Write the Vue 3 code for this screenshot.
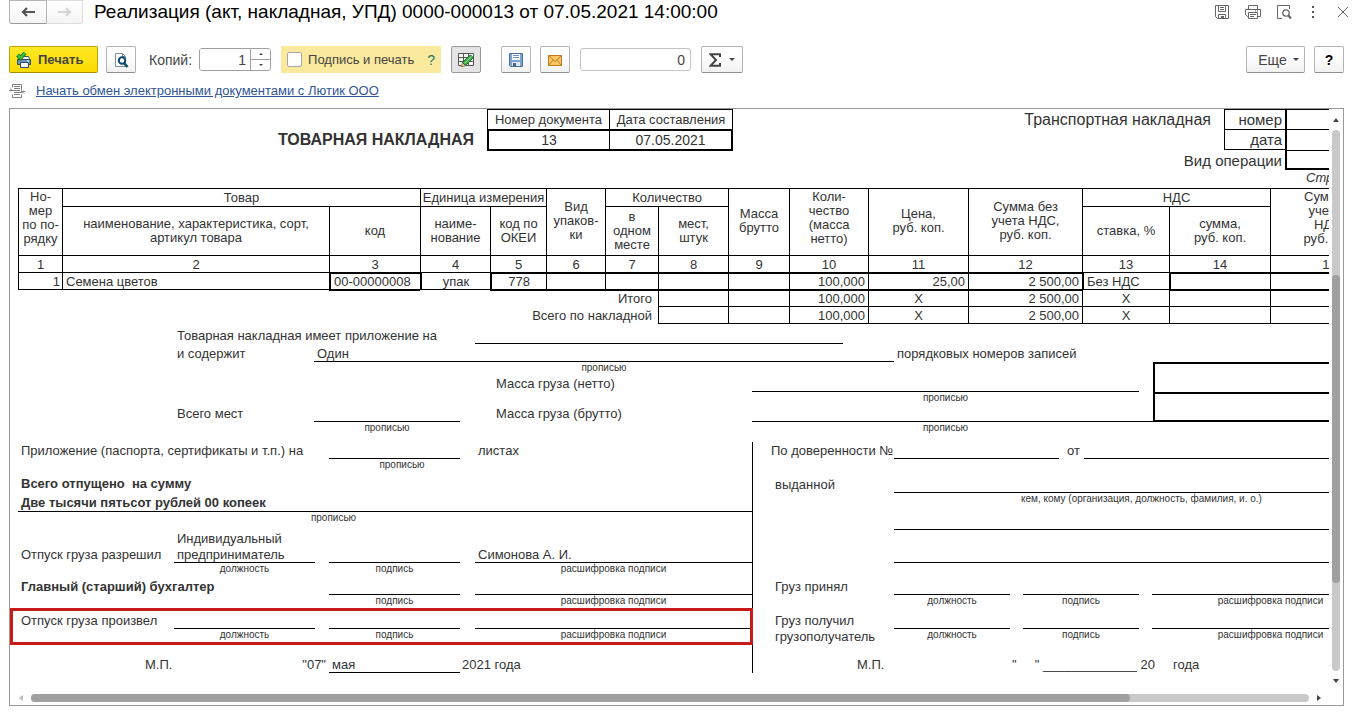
<script setup>
import { ref } from 'vue'

const copies = ref('1')
const total = ref('0')
const signed = ref(false)

const columnWidths = [44, 267, 91, 70, 56, 59, 53, 70, 61, 79, 100, 114, 87, 101, 118]
const blankDate = '"     " _____________ 20     года'
</script>

<template>
  <main class="window">
    <header class="titlebar">
      <nav class="history">
        <button type="button" aria-label="Назад">
          <svg width="14" height="10" viewBox="0 0 14 10"><path d="M6 1 2 5l4 4M2 5h12" fill="none" stroke="#555" stroke-width="2.2" /></svg>
        </button>
        <button type="button" class="off" aria-label="Вперед">
          <svg width="14" height="10" viewBox="0 0 14 10"><path d="m8 1 4 4-4 4M12 5H0" fill="none" stroke="#d4d4d4" stroke-width="2" /></svg>
        </button>
      </nav>
      <h1>Реализация (акт, накладная, УПД) 0000-000013 от 07.05.2021 14:00:00</h1>
      <div class="tools">
        <button type="button" aria-label="Сохранить">
          <svg width="16" height="16" viewBox="0 0 16 16" fill="none" stroke="#666"><path d="M1.500 1.500h13v13h-11l-2-2z" /><path d="M4.500 1.500v6h7v-6M6 3.500h4M6 5.500h4M4.500 14.500v-4h7v4" /><path d="M7 12h3v2.500H7z" fill="#666" stroke="none" /></svg>
        </button>
        <button type="button" aria-label="Печать">
          <svg width="16" height="16" viewBox="0 0 16 16" fill="none" stroke="#666"><path d="M3.500 5.500v-4h9v4M3.500 12.500h-1l-2-2v-5h15v7h-3M3.500 8.500h9v6h-9zM5 10.500h6M5 12.500h4M10 7h1M12 7h1" /></svg>
        </button>
        <button type="button" aria-label="Просмотр">
          <svg width="16" height="16" viewBox="0 0 16 16" fill="none" stroke="#666"><path d="M6 14.500H1.500v-13h12V5" /><circle cx="10" cy="9" r="3.200" stroke-width="1.300" /><path d="m12 11 3 3.500" stroke-width="2" /></svg>
        </button>
        <button type="button" aria-label="Меню">
          <svg width="16" height="16" viewBox="0 0 16 16" fill="#555"><path d="M7 2h2v2H7zM7 7h2v2H7zM7 12h2v2H7z" /></svg>
        </button>
        <button type="button" aria-label="Закрыть">
          <svg width="16" height="16" viewBox="0 0 16 16" fill="none" stroke="#666"><path d="m3 3 10 10M13 3 3 13" /></svg>
        </button>
      </div>
    </header>

    <section class="toolbar">
      <button type="button" class="btn print">
        <svg width="16" height="16" viewBox="0 0 16 16">
          <path d="M4.500 7V4.500h8L13.500 7" fill="#fff" stroke="#3c5a78" />
          <path d="M1.500 7.500h13v5h-13z" fill="#6d93b8" stroke="#2f4d6b" />
          <path d="M4.500 10.500h8v5h-8z" fill="#fff" stroke="#2f4d6b" />
          <path d="M11 9h2" stroke="#fff" />
          <path d="m1.500 3 3 3L9 1" fill="none" stroke="#1d7a1d" stroke-width="4" />
          <path d="m1.500 3 3 3L9 1" fill="none" stroke="#42c33a" stroke-width="2.200" />
        </svg>
        Печать
      </button>
      <button type="button" class="btn icon preview" aria-label="Предварительный просмотр">
        <svg width="16" height="16" viewBox="0 0 16 16" fill="none"><path d="M2.500 1.500h7l3 3v10h-10z" fill="#fff" stroke="#78909c" /><path d="M9.500 1.500v3h3" stroke="#78909c" /><circle cx="9" cy="8.500" r="3.200" fill="#fff" stroke="#0d4a6b" stroke-width="2" /><path d="m11 11 3.500 4" stroke="#0d4a6b" stroke-width="2.600" /></svg>
      </button>
      <label class="caption" for="copies">Копий:</label>
      <div class="spin">
        <input id="copies" v-model="copies" type="text" />
        <div class="arrows">
          <button type="button" aria-label="Больше"><svg width="4" height="2" viewBox="0 0 4 2"><path d="M0 2 2 0l2 2z" fill="#444" /></svg></button>
          <button type="button" aria-label="Меньше"><svg width="4" height="2" viewBox="0 0 4 2"><path d="M0 0h4L2 2z" fill="#444" /></svg></button>
        </div>
      </div>
      <div class="sign">
        <input id="sign" v-model="signed" type="checkbox" />
        <label for="sign">Подпись и печать</label>
        <a href="#">?</a>
      </div>
      <button type="button" class="btn icon edit" aria-label="Редактирование">
        <svg width="18" height="16" viewBox="0 0 18 16"><path d="M1.500 1.500h15v12h-15zM1.500 5.500h15M1.500 9.500h15M6.500 1.500v12M11.500 1.500v12" fill="#fff" stroke="#555" /><path d="m4 15 1.500-4.500 3 3z" fill="#f0c080" stroke="#8a6030" stroke-width=".7" /><path d="m5.500 10.500 7-7c1.500-1 4 1.500 3 3l-7 7z" fill="#3fae49" stroke="#1e6e2a" /><path d="m7.500 11.500 7-7" stroke="#8fdc8f" /></svg>
      </button>
      <button type="button" class="btn icon save" aria-label="Сохранить">
        <svg width="16" height="16" viewBox="0 0 16 16"><path d="M1.500 1.500h13v13h-12l-1-1z" fill="#7fa6d0" stroke="#4a6f9a" /><path d="M4 2h8v6H4z" fill="#fff" /><path d="M5 3.500h6M5 5.500h6" stroke="#6b8fb8" /><path d="M4 10h8v4H4z" fill="#dfe8f2" /><path d="M5 11h3v3H5z" fill="#47658a" /></svg>
      </button>
      <button type="button" class="btn icon mail" aria-label="Отправить">
        <svg width="16" height="16" viewBox="0 0 16 16"><path d="M1.500 3.500h13v10h-13z" fill="#fbc766" stroke="#bf7a1c" /><path d="m1.500 3.500 6.500 6 6.500-6M1.500 13.500 6 8M14.500 13.500 10 8" fill="none" stroke="#bf7a1c" /></svg>
      </button>
      <input v-model="total" class="total" type="text" aria-label="Сумма ячеек" />
      <button type="button" class="btn sigma" aria-label="Сумма">
        <svg width="12" height="14" viewBox="0 0 12 14"><path d="M11 4V1.200H1.500L7 7l-5.500 5.800H11V10" fill="none" stroke="#444" stroke-width="2" /></svg>
        <i class="drop"></i>
      </button>
      <button type="button" class="btn more">Еще <i class="drop"></i></button>
      <button type="button" class="btn help">?</button>
    </section>

    <div class="exchange">
      <svg width="16" height="16" viewBox="0 0 16 16" fill="none" stroke="#808080"><path d="M3.500 4.500v-3h9v6M3.500 11.500v3h9v-3M5 3.500h6M5 5.500h6M3 7.500h8M5 9.500h8M5 11.500h6" /><path d="M2 5.500v3M0 7.500h4M14 7.500v3M12 8.500h4" /></svg>
      <a href="#">Начать обмен электронными документами с Лютик ООО</a>
    </div>

    <section class="panel">
      <div class="viewport">
        <div class="sheet">
          <div class="head">
            <h2>ТОВАРНАЯ НАКЛАДНАЯ</h2>
            <table class="docno">
              <thead><tr><th>Номер документа</th><th>Дата составления</th></tr></thead>
              <tbody><tr><td>13</td><td>07.05.2021</td></tr></tbody>
            </table>
            <table class="transport">
              <tbody>
                <tr><td class="t-name">Транспортная накладная</td><td class="t-key">номер</td><td class="t-val"></td></tr>
                <tr><td></td><td class="t-key last">дата</td><td class="t-val"></td></tr>
                <tr><td class="t-op" colspan="2">Вид операции</td><td class="t-val last"></td></tr>
              </tbody>
            </table>
          </div>
          <p class="pageno">Страница 1</p>

          <table class="goods">
            <colgroup><col v-for="(w, i) in columnWidths" :key="i" :style="{ width: w + 'px' }" /></colgroup>
            <thead>
              <tr class="r1">
                <th rowspan="2" class="tall">Но-<br />мер<br />по по-<br />рядку</th>
                <th colspan="2">Товар</th>
                <th colspan="2">Единица измерения</th>
                <th rowspan="2">Вид<br />упаков-<br />ки</th>
                <th colspan="2">Количество</th>
                <th rowspan="2">Масса<br />брутто</th>
                <th rowspan="2" class="tall">Коли-<br />чество<br />(масса<br />нетто)</th>
                <th rowspan="2">Цена,<br />руб. коп.</th>
                <th rowspan="2">Сумма без<br />учета НДС,<br />руб. коп.</th>
                <th colspan="2">НДС</th>
                <th rowspan="2" class="tall">Сумма с<br />учетом<br />НДС,<br />руб. коп.</th>
              </tr>
              <tr class="r2">
                <th>наименование, характеристика, сорт,<br />артикул товара</th>
                <th>код</th>
                <th>наиме-<br />нование</th>
                <th>код по<br />ОКЕИ</th>
                <th>в<br />одном<br />месте</th>
                <th>мест,<br />штук</th>
                <th>ставка, %</th>
                <th>сумма,<br />руб. коп.</th>
              </tr>
              <tr class="nums"><th v-for="n in 15" :key="n">{{ n }}</th></tr>
            </thead>
            <tbody>
              <tr>
                <td class="num">1</td>
                <td>Семена цветов</td>
                <td class="bl bt">00-00000008</td>
                <td class="bl mid">упак</td>
                <td class="bl bt mid">778</td>
                <td class="bt"></td>
                <td class="bt"></td>
                <td class="bt"></td>
                <td class="bt"></td>
                <td class="bt num">100,000</td>
                <td class="bt num">25,00</td>
                <td class="bt num">2 500,00</td>
                <td class="bl">Без НДС</td>
                <td class="bl bt"></td>
                <td class="bt"></td>
              </tr>
              <tr>
                <td class="nl" colspan="2"></td>
                <td class="nl bt"></td>
                <td class="nl"></td>
                <td class="nl bt label" colspan="3">Итого</td>
                <td class="bt"></td>
                <td class="bt"></td>
                <td class="bt num">100,000</td>
                <td class="bt mid">Х</td>
                <td class="bt num">2 500,00</td>
                <td class="mid">Х</td>
                <td class="bt"></td>
                <td class="bt"></td>
              </tr>
              <tr class="end">
                <td class="nl nt label" colspan="7">Всего по накладной</td>
                <td></td>
                <td></td>
                <td class="num">100,000</td>
                <td class="mid">Х</td>
                <td class="num">2 500,00</td>
                <td class="mid">Х</td>
                <td></td>
                <td></td>
              </tr>
            </tbody>
          </table>

          <div class="middle">
            <span class="m-app">Товарная накладная имеет приложение на</span>
            <span class="m-app-line line"></span>
            <span class="m-has">и содержит</span>
            <span class="m-has-line line">Один</span>
            <span class="m-rec">порядковых номеров записей</span>
            <small class="m-has-cap">прописью</small>
            <span class="m-net">Масса груза (нетто)</span>
            <span class="m-net-line line"></span>
            <small class="m-net-cap">прописью</small>
            <span class="m-places">Всего мест</span>
            <span class="m-places-line line"></span>
            <span class="m-gross">Масса груза (брутто)</span>
            <span class="m-gross-line line"></span>
            <small class="m-places-cap">прописью</small>
            <small class="m-gross-cap">прописью</small>
            <span class="m-box one"></span>
            <span class="m-box two"></span>
          </div>

          <div class="bottom">
            <div class="left">
              <div class="row h17">
                <span class="w-abc">Приложение (паспорта, сертификаты и т.п.) на</span>
                <span class="w-d line"></span>
                <span class="w-f after">листах</span>
              </div>
              <div class="row caps"><span class="w-abc"></span><small class="w-d wide">прописью</small></div>
              <div class="row h22"><b>Всего отпущено&nbsp; на сумму</b></div>
              <div class="row h20 line"><b>Две тысячи пятьсот рублей 00 копеек</b></div>
              <div class="row caps"><small class="w-sum">прописью</small></div>
              <div class="row h40">
                <span class="w-a">Отпуск груза разрешил</span>
                <span class="w-b line">Индивидуальный предприниматель</span>
                <span class="w-d line"></span>
                <span class="w-f line">Симонова А. И.</span>
              </div>
              <div class="row caps">
                <span class="w-a"></span><small class="w-b">должность</small><small class="w-d">подпись</small><small class="w-f">расшифровка подписи</small>
              </div>
              <div class="row h21">
                <b class="w-abc">Главный (старший) бухгалтер</b>
                <span class="w-d line"></span>
                <span class="w-f line"></span>
              </div>
              <div class="row caps">
                <span class="w-abc"></span><small class="w-d">подпись</small><small class="w-f">расшифровка подписи</small>
              </div>
              <div class="marked">
                <div class="row h23">
                  <span class="w-a">Отпуск груза произвел</span>
                  <span class="w-b line"></span>
                  <span class="w-d line"></span>
                  <span class="w-f line"></span>
                </div>
                <div class="row caps">
                  <span class="w-a"></span><small class="w-b">должность</small><small class="w-d">подпись</small><small class="w-f">расшифровка подписи</small>
                </div>
              </div>
              <div class="row h33">
                <span class="w-a stamp">М.П.</span>
                <span class="day">"07"</span>
                <span class="w-d line">мая</span>
                <span class="year">2021 года</span>
              </div>
            </div>

            <div class="right">
              <div class="row h17">
                <span class="w-g proxy">По доверенности №</span>
                <span class="w-proxy line"></span>
                <span class="w-from">от</span>
                <span class="fill line"></span>
              </div>
              <div class="row h34"><span class="w-g">выданной</span><span class="fill line"></span></div>
              <div class="row caps"><span class="w-g"></span><small class="fill">кем, кому (организация, должность, фамилия, и. о.)</small></div>
              <div class="row h26"><span class="w-g"></span><span class="fill line"></span></div>
              <div class="row h33"><span class="w-g"></span><span class="fill line"></span></div>
              <div class="row h32">
                <span class="w-g">Груз принял</span><span class="w-h line"></span><span class="w-h line"></span><span class="fill line"></span>
              </div>
              <div class="row caps">
                <span class="w-g"></span><small class="w-h">должность</small><small class="w-h">подпись</small><small class="fill">расшифровка подписи</small>
              </div>
              <div class="row h23">
                <span class="w-g">Груз получил</span><span class="w-h line"></span><span class="w-h line"></span><span class="fill line"></span>
              </div>
              <div class="row caps">
                <span class="w-g">грузополучатель</span><small class="w-h">должность</small><small class="w-h">подпись</small><small class="fill">расшифровка подписи</small>
              </div>
              <div class="row h33">
                <span class="w-stamp">М.П.</span>
                <span class="date">{{ blankDate }}</span>
              </div>
            </div>
          </div>
        </div>
      </div>
      <div class="vbar">
        <svg width="6" height="4" viewBox="0 0 6 4"><path d="m0 4 3-4 3 4z" fill="#444" /></svg>
        <div class="track"><div class="thumb"></div></div>
        <svg width="6" height="4" viewBox="0 0 6 4"><path d="M0 0h6L3 4z" fill="#444" /></svg>
      </div>
      <div class="hbar">
        <svg width="4" height="6" viewBox="0 0 4 6"><path d="M4 0v6L0 3z" fill="#bbb" /></svg>
        <div class="track"><div class="thumb"></div></div>
        <svg width="4" height="6" viewBox="0 0 4 6"><path d="M0 0v6l4-3z" fill="#444" /></svg>
      </div>
    </section>
  </main>
</template>

<style>
body {
  margin: 0;
  background: #fff;
}
</style>

<style scoped>
* {
  box-sizing: border-box;
}
.window {
  padding: 0 13px 11px 9px;
  font-family: "Liberation Sans", Arial, sans-serif;
  font-size: 13px;
  line-height: 16px;
  color: #333;
}
button,
input {
  font: inherit;
  color: inherit;
  margin: 0;
}
svg {
  display: block;
  flex: none;
}

.titlebar {
  display: flex;
  align-items: center;
  height: 24px;
}
.history {
  display: flex;
  height: 24px;
}
.history button {
  display: grid;
  place-items: center;
  width: 38px;
  padding: 0;
  border: 1px solid #b5b5b5;
  border-bottom-color: #999;
  border-radius: 0 0 0 3px;
  background: linear-gradient(#fff, #f4f4f4);
}
.history .off {
  width: 36px;
  border-left: 0;
  border-color: #ddd;
  border-radius: 0 0 3px 0;
}
h1 {
  flex: 1;
  margin: 0 0 0 11px;
  font-size: 19px;
  font-weight: 400;
  line-height: 22px;
  color: #000;
  white-space: nowrap;
}
.tools {
  display: flex;
  gap: 15px;
}
.tools button {
  padding: 0;
  border: 0;
  background: none;
}
.tools button:last-child {
  margin-right: -7px;
}
.tools button:nth-child(4) {
  margin-right: -1px;
  margin-left: -2px;
}

.toolbar {
  display: flex;
  align-items: center;
  height: 27px;
  margin-top: 22px;
  color: #444;
  font-size: 14px;
}
.btn {
  display: flex;
  align-items: center;
  justify-content: center;
  height: 27px;
  padding: 0;
  border: 1px solid #b3b3b3;
  border-bottom-color: #8f8f8f;
  border-radius: 2px;
  background: linear-gradient(#fff 40%, #f1f1f1);
}
.icon {
  width: 30px;
}
.print {
  justify-content: flex-start;
  gap: 6px;
  width: 89px;
  padding-left: 6px;
  border-color: #c2a200 #c2a200 #a88c00;
  background: linear-gradient(#ffe925, #fbd900);
  font-weight: 700;
  font-size: 13px;
}
.preview {
  margin-left: 8px;
}
.caption {
  margin-left: 13px;
}
.spin {
  display: flex;
  width: 72px;
  height: 23px;
  margin-left: 7px;
  border: 1px solid #a0a0a0;
  border-radius: 3px;
  overflow: hidden;
}
.spin input {
  width: 50px;
  padding: 0 4px;
  border: 0;
  text-align: right;
}
.arrows {
  display: flex;
  flex: 1;
  flex-direction: column;
  border-left: 1px solid #a0a0a0;
}
.arrows button {
  display: grid;
  flex: 1;
  place-items: center;
  padding: 0;
  border: 0;
  background: #fff;
}
.arrows button + button {
  border-top: 1px solid #a0a0a0;
}
.sign {
  display: flex;
  align-items: center;
  width: 160px;
  height: 27px;
  margin-left: 10px;
  padding: 0 6px;
  background: #fbe99d;
  font-size: 13px;
}
.sign input {
  appearance: none;
  width: 15px;
  height: 15px;
  margin-right: 6px;
  border: 1px solid #a8a8a8;
  border-radius: 2px;
  background: #fff;
}
.sign a {
  margin-left: auto;
  color: #1b7a6b;
  font-size: 14px;
  text-decoration: none;
}
.edit {
  margin-left: 10px;
  border-color: #999;
  background: #e4e4e4;
}
.save {
  margin-left: 20px;
}
.mail {
  margin-left: 9px;
}
.total {
  width: 111px;
  height: 23px;
  margin-left: 10px;
  padding: 0 5px;
  border: 1px solid #c4c4c4;
  border-radius: 3px;
  text-align: right;
}
.sigma {
  gap: 8px;
  width: 42px;
  margin-left: 10px;
}
.drop {
  width: 0;
  height: 0;
  border: 3px solid transparent;
  border-top-color: #444;
  border-bottom: 0;
}
.more {
  gap: 6px;
  width: 59px;
  margin-left: auto;
  padding-left: 6px;
}
.help {
  width: 30px;
  margin-left: 9px;
  color: #000;
  font-weight: 700;
}

.exchange {
  display: flex;
  align-items: center;
  gap: 11px;
  margin: 10px 0 9px;
}
.exchange a {
  color: #2f5597;
}

.panel {
  display: grid;
  grid-template-columns: minmax(0, 1fr) 14px;
  border: 1px solid #999;
}
.viewport {
  overflow: hidden;
}
.sheet {
  width: 1379px;
  padding: 0 0 18px 8px;
}
table {
  border-collapse: separate;
  border-spacing: 0;
  table-layout: fixed;
}
th,
td {
  padding: 0;
  font-weight: 400;
}

.head {
  display: flex;
  align-items: flex-start;
}
h2 {
  width: 456px;
  margin: 21px 13px 0 0;
  font-size: 16px;
  line-height: 20px;
  text-align: right;
}
.docno {
  width: 246px;
  text-align: center;
}
.docno th {
  width: 122px;
  height: 20px;
  border: solid #000;
  border-width: 1px 0 0 1px;
  line-height: 18px;
}
.docno th:last-child {
  width: 124px;
  border-right-width: 1px;
}
.docno td {
  height: 22px;
  border: solid #000;
  border-width: 2px 0 2px 2px;
  font-size: 14px;
  line-height: 18px;
}
.docno td:last-child {
  border-width: 2px 2px 2px 1px;
}
.transport {
  width: 379px;
  margin-left: auto;
  font-size: 15px;
  text-align: right;
}
.transport td {
  height: 20px;
  line-height: 19px;
}
.transport .t-name {
  width: 214px;
  padding-right: 13px;
  font-size: 16px;
}
.transport .t-key {
  width: 61px;
  padding-right: 3px;
  border: solid #000;
  border-width: 1px 0 0 1px;
}
.transport .t-key.last {
  border-bottom-width: 1px;
}
.transport .t-val {
  border: solid #000;
  border-width: 1px 0 0 2px;
}
.transport .t-val.last {
  border-bottom-width: 2px;
}
.transport .t-op {
  padding-right: 3px;
}
.pageno {
  width: 83px;
  margin: 0 0 2px auto;
  line-height: 16px;
  font-style: italic;
}

.goods {
  width: 1370px;
}
.goods th,
.goods td {
  border: solid #000;
  border-width: 1px 0 0 1px;
}
.goods th {
  line-height: 14px;
  white-space: nowrap;
}
.goods th[rowspan] {
  padding-bottom: 2px;
}
.goods .tall {
  padding-top: 1px;
  vertical-align: top;
}
.goods .r1 {
  height: 18px;
}
.goods .r2 {
  height: 49px;
}
.goods .nums th,
.goods td {
  height: 17px;
  line-height: 15px;
}
.goods td {
  padding: 0 3px;
  white-space: nowrap;
}
.goods .num {
  text-align: right;
}
.goods .num:first-child {
  padding-right: 2px;
}
.goods .mid {
  text-align: center;
}
.goods .label {
  padding-right: 6px;
  text-align: right;
}
.goods .bl {
  border-left-width: 2px;
}
.goods .bt {
  border-top-width: 2px;
}
.goods .nl {
  border-left-width: 0;
}
.goods .nt {
  border-top-width: 0;
}
.goods .end td {
  height: 18px;
}
.goods .end td:not(.label) {
  border-bottom-width: 1px;
}

.line {
  box-shadow: inset 0 -1px #000;
}
small {
  font-size: 10px;
  line-height: 12px;
  text-align: center;
  white-space: nowrap;
}

.middle {
  display: grid;
  grid-template-columns: 156px 140px 146px 15px 19px 258px 91px 51px 245px 14px 1fr;
  grid-template-rows: 20px 18px 11px 19px 11px 19px 11px;
  align-items: end;
}
.middle small {
  align-self: start;
}
.middle .line {
  align-self: stretch;
}
.m-app { grid-area: 1 / 2 / 2 / 5; padding-left: 3px; }
.m-app-line { grid-area: 1 / 5 / 2 / 8; }
.m-has { grid-area: 2 / 2 / 3 / 3; padding-left: 3px; }
.m-has-line { grid-area: 2 / 3 / 3 / 9; padding: 2px 0 0 3px; }
.m-rec { grid-area: 2 / 9 / 3 / 10; padding-left: 3px; }
.m-has-cap { grid-area: 3 / 3 / 4 / 9; }
.m-net { grid-area: 4 / 6 / 5 / 7; padding-left: 2px; }
.m-net-line { grid-area: 4 / 7 / 5 / 10; }
.m-net-cap { grid-area: 5 / 7 / 6 / 10; }
.m-places { grid-area: 6 / 2 / 7 / 3; padding-left: 3px; }
.m-places-line { grid-area: 6 / 3 / 7 / 4; }
.m-gross { grid-area: 6 / 6 / 7 / 7; padding-left: 2px; }
.m-gross-line { grid-area: 6 / 7 / 7 / 11; }
.m-places-cap { grid-area: 7 / 3 / 8 / 4; }
.m-gross-cap { grid-area: 7 / 7 / 8 / 10; }
.m-box {
  align-self: stretch;
  border: solid #000;
  border-width: 2px 0 0 2px;
}
.m-box.one { grid-area: 3 / 11 / 5 / 12; }
.m-box.two { grid-area: 5 / 11 / 7 / 12; border-bottom-width: 2px; }

.bottom {
  display: flex;
  margin-top: 9px;
}
.left {
  width: 735px;
  border-right: 1px solid #000;
}
.right {
  flex: 1;
}
.row {
  display: flex;
  align-items: flex-end;
}
.row > * {
  flex: none;
}
.row > .line {
  display: flex;
  align-items: flex-end;
  align-self: stretch;
  padding-left: 3px;
}
.row > .fill {
  flex: 1;
}
.h17 { height: 17px; }
.h20 { height: 20px; }
.h21 { height: 21px; }
.h22 { height: 22px; }
.h23 { height: 23px; }
.h26 { height: 26px; }
.h32 { height: 32px; }
.h33 { height: 33px; }
.h34 { height: 34px; }
.h40 { height: 40px; }
.h20 b {
  line-height: 18px;
}
.row > b {
  padding-left: 3px;
}
.caps {
  align-items: flex-start;
  height: 11px;
}
.w-a { width: 156px; padding-left: 3px; }
.w-b { width: 141px; margin-right: 14px; }
.w-abc { width: 311px; padding-left: 3px; }
.w-d { width: 131px; margin-right: 15px; }
.w-f { width: 277px; }
.w-f.after { padding-left: 3px; }
.w-d.wide { padding-left: 15px; }
.w-sum { width: 631px; }
.w-a.stamp { padding-left: 127px; }
.day { width: 155px; padding-right: 3px; text-align: right; }
.row > .line + .year { margin-left: -13px; }
.w-g { width: 141px; padding-left: 22px; white-space: nowrap; }
.w-g.proxy { padding-left: 18px; }
.w-proxy { width: 165px; }
.w-from { width: 25px; padding-left: 8px; }
.w-h { width: 116px; margin-right: 13px; }
.w-stamp { width: 259px; padding-left: 104px; }
.date { white-space: pre; }

.marked {
  position: relative;
}
.marked::after {
  position: absolute;
  inset: 2px -1px -5px -8px;
  border: 3px solid #c91a1a;
  content: "";
}

.vbar,
.hbar {
  display: flex;
  align-items: center;
}
.vbar {
  flex-direction: column;
  gap: 8px;
  padding: 9px 1px 8px 0;
}
.hbar {
  gap: 8px;
  height: 14px;
  padding: 0 8px 0 9px;
}
.track {
  flex: 1;
  border-radius: 4px;
  background: #c9c9c9;
}
.thumb {
  border-radius: 4px;
  background: #a0a0a0;
}
.vbar .track {
  width: 8px;
  padding-top: 145px;
}
.vbar .thumb {
  height: 308px;
}
.hbar .thumb {
  width: 86%;
  height: 8px;
}
</style>
